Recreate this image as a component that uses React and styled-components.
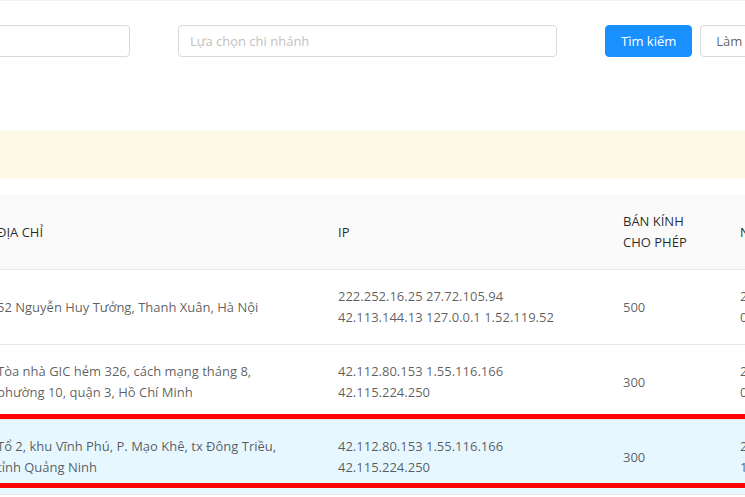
import React from 'react'
import styled, { createGlobalStyle } from 'styled-components'

const GlobalStyle = createGlobalStyle`
  body {
    margin: 0;
    background: #f0f2f5;
    font-family: "Open Sans", "Noto Sans", sans-serif;
    font-size: 13px;
    line-height: 21px;
    color: rgba(0, 0, 0, 0.65);
  }
  * { box-sizing: border-box; }
`;

const rows = [
  {
    id: 1,
    name: 'Chi nhánh Hà Nội',
    address: ['52 Nguyễn Huy Tưởng, Thanh Xuân, Hà Nội'],
    ip: ['222.252.16.25 27.72.105.94', '42.113.144.13 127.0.0.1 1.52.119.52'],
    radius: 500,
    created: ['2020-06-15', '09:12:45'],
  },
  {
    id: 2,
    name: 'Chi nhánh Hồ Chí Minh',
    address: ['Tòa nhà GIC hẻm 326, cách mạng tháng 8,', 'phường 10, quận 3, Hồ Chí Minh'],
    ip: ['42.112.80.153 1.55.116.166', '42.115.224.250'],
    radius: 300,
    created: ['2020-06-15', '09:20:31'],
  },
  {
    id: 3,
    name: 'Chi nhánh Quảng Ninh',
    address: ['Tổ 2, khu Vĩnh Phú, P. Mạo Khê, tx Đông Triều,', 'tỉnh Quảng Ninh'],
    ip: ['42.112.80.153 1.55.116.166', '42.115.224.250'],
    radius: 300,
    created: ['2020-06-16', '10:05:18'],
    marked: true,
  },
]

function App() {
  return (
    <Page>
      <GlobalStyle />
      <Card>
        <SearchRow>
          <Field placeholder='Tên chi nhánh' />
          <Field placeholder='Lựa chọn chi nhánh' />
          <Actions>
            <Button primary>Tìm kiếm</Button>
            <Button>Làm mới</Button>
          </Actions>
        </SearchRow>
        <Notice />
        <Table>
          <colgroup>
            <col style={{ width: 70 }} />
            <col style={{ width: 160 }} />
            <col style={{ width: 341 }} />
            <col style={{ width: 285 }} />
            <col style={{ width: 117 }} />
            <col style={{ width: 200 }} />
          </colgroup>
          <thead>
            <tr>
              <Th>STT</Th>
              <Th>TÊN CHI NHÁNH</Th>
              <Th>ĐỊA CHỈ</Th>
              <Th>IP</Th>
              <Th>BÁN KÍNH<br />CHO PHÉP</Th>
              <Th>NGÀY TẠO</Th>
            </tr>
          </thead>
          <tbody>
            {rows.map(r => (
              <Row key={r.id} marked={r.marked}>
                <Td marked={r.marked}>{r.id}</Td>
                <Td marked={r.marked}>{r.name}</Td>
                <Td marked={r.marked}>{r.address.map((l, i) => <Line key={i}>{l}</Line>)}</Td>
                <Td marked={r.marked}>{r.ip.map((l, i) => <Line key={i}>{l}</Line>)}</Td>
                <Td marked={r.marked}>{r.radius}</Td>
                <Td marked={r.marked}>{r.created.map((l, i) => <Line key={i}>{l}</Line>)}</Td>
              </Row>
            ))}
          </tbody>
        </Table>
      </Card>
    </Page>
  )
}

const Page = styled.div`
  width: 745px;
  height: 497px;
  overflow: hidden;
  padding-top: 1px;
`;

const Card = styled.div`
  background: #fff;
  margin-left: -249px;
  width: 1300px;
  height: 100%;
  padding-top: 24px;
`;

const SearchRow = styled.div`
  display: flex;
  align-items: center;
  gap: 48px;
`;

const Field = styled.input`
  width: 379px;
  height: 32px;
  padding: 0 11px;
  border: 1px solid #d9d9d9;
  border-radius: 4px;
  font: inherit;
  color: rgba(0, 0, 0, 0.65);
  outline: none;
  &::placeholder { color: #bfbfbf; }
`;

const Actions = styled.div`
  display: flex;
  gap: 8px;
`;

const Button = styled.button`
  height: 32px;
  padding: 0 15px;
  border-radius: 4px;
  font: inherit;
  border: 1px solid ${p => (p.primary ? '#1890ff' : '#d9d9d9')};
  background: ${p => (p.primary ? '#1890ff' : '#fff')};
  color: ${p => (p.primary ? '#fff' : 'rgba(0, 0, 0, 0.65)')};
`;

const Notice = styled.div`
  margin-top: 74px;
  height: 48px;
  background: #fef9e7;
`;

const Table = styled.table`
  margin-top: 16px;
  border-collapse: collapse;
  table-layout: fixed;
  width: 1173px;
`;

const Th = styled.th`
  padding: 16px;
  text-align: left;
  font-weight: 400;
  color: rgba(0, 0, 0, 0.85);
  background: #fafafa;
  border-bottom: 1px solid #e8e8e8;
  vertical-align: middle;
`;

const Row = styled.tr`
  background: ${p => (p.marked ? '#e6f7ff' : '#fff')};
`;

/* red highlight marks over the selected row */
const Td = styled.td`
  position: relative;
  padding: 16px;
  border-bottom: 1px solid #e8e8e8;
  vertical-align: middle;
  ${p => p.marked && `
    &::before, &::after {
      content: '';
      position: absolute;
      left: 0;
      right: 0;
      height: 5px;
      background: #ff0000;
    }
    &::before { top: -6px; }
    &::after { bottom: 6px; }
  `}
`;

const Line = styled.div`
  white-space: nowrap;
`;

export default App
